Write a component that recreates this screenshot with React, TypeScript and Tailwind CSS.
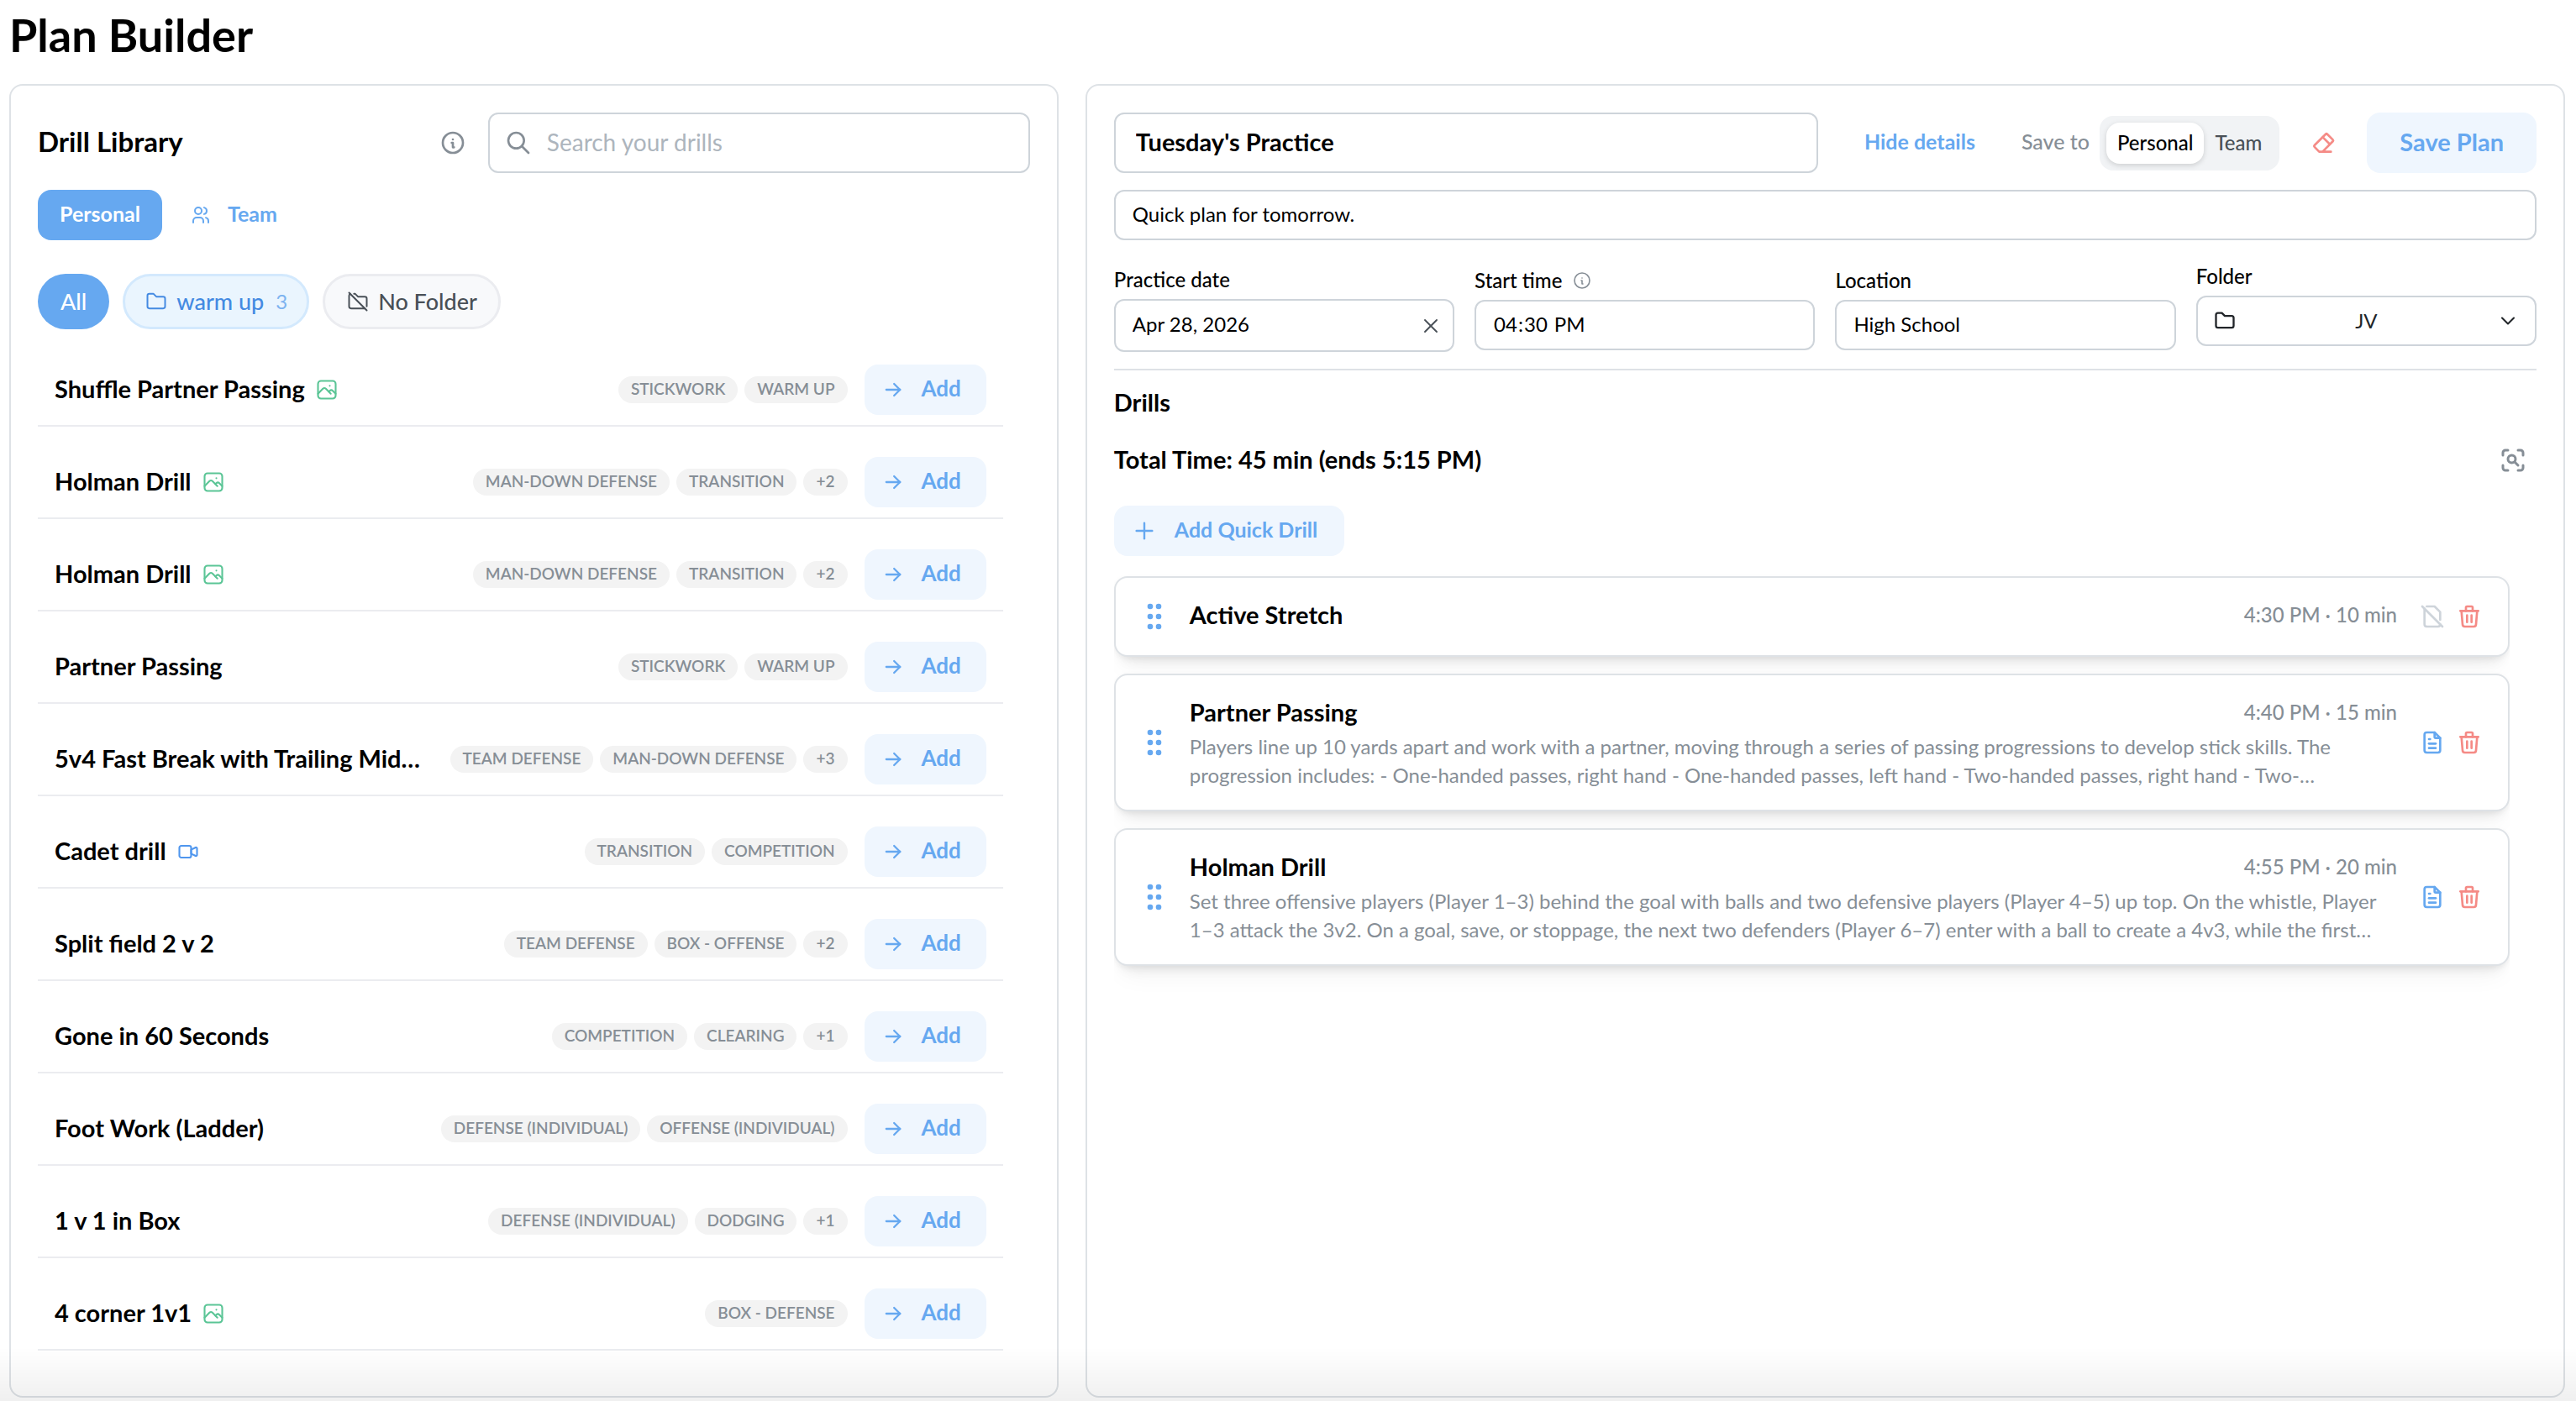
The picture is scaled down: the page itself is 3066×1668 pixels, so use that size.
import React, { useState } from 'react';
import {
  TbArrowRight,
  TbChevronDown,
  TbEraser,
  TbFileOff,
  TbFileText,
  TbFolder,
  TbFolderOff,
  TbInfoCircle,
  TbPhoto,
  TbPlus,
  TbSearch,
  TbTrash,
  TbUsers,
  TbVideo,
  TbX,
  TbZoomScan,
} from 'react-icons/tb';

interface LibraryDrill {
  name: string;
  media?: 'photo' | 'video';
  tags: string[];
}

interface PlanDrill {
  name: string;
  time: string;
  description?: string;
}

const libraryDrills: LibraryDrill[] = [
  { name: 'Shuffle Partner Passing', media: 'photo', tags: ['Stickwork', 'Warm Up'] },
  { name: 'Holman Drill', media: 'photo', tags: ['Man-Down Defense', 'Transition', '+2'] },
  { name: 'Holman Drill', media: 'photo', tags: ['Man-Down Defense', 'Transition', '+2'] },
  { name: 'Partner Passing', tags: ['Stickwork', 'Warm Up'] },
  { name: '5v4 Fast Break with Trailing Mid…', tags: ['Team Defense', 'Man-Down Defense', '+3'] },
  { name: 'Cadet drill', media: 'video', tags: ['Transition', 'Competition'] },
  { name: 'Split field 2 v 2', tags: ['Team Defense', 'Box - Offense', '+2'] },
  { name: 'Gone in 60 Seconds', tags: ['Competition', 'Clearing', '+1'] },
  { name: 'Foot Work (Ladder)', tags: ['Defense (Individual)', 'Offense (Individual)'] },
  { name: '1 v 1 in Box', tags: ['Defense (Individual)', 'Dodging', '+1'] },
  { name: '4 corner 1v1', media: 'photo', tags: ['Box - Defense'] },
];

const planDrills: PlanDrill[] = [
  { name: 'Active Stretch', time: '4:30 PM · 10 min' },
  {
    name: 'Partner Passing',
    time: '4:40 PM · 15 min',
    description:
      'Players line up 10 yards apart and work with a partner, moving through a series of passing progressions to develop stick skills. The progression includes: - One-handed passes, right hand - One-handed passes, left hand - Two-handed passes, right hand - Two-…',
  },
  {
    name: 'Holman Drill',
    time: '4:55 PM · 20 min',
    description:
      'Set three offensive players (Player 1–3) behind the goal with balls and two defensive players (Player 4–5) up top. On the whistle, Player 1–3 attack the 3v2. On a goal, save, or stoppage, the next two defenders (Player 6–7) enter with a ball to create a 4v3, while the first…',
  },
];

const inputClass =
  'w-full rounded-xl border-2 border-[#ced4da] bg-white text-[24px] text-black outline-none';

function GripDots() {
  return (
    <svg width="32" height="32" viewBox="0 0 32 32" fill="currentColor">
      {[4, 16, 28].map((y) => (
        <React.Fragment key={y}>
          <circle cx="11" cy={y} r="3.3" />
          <circle cx="21" cy={y} r="3.3" />
        </React.Fragment>
      ))}
    </svg>
  );
}

function LibraryRow({ drill }: { drill: LibraryDrill }) {
  return (
    <li className="flex items-center border-b-2 border-[#ebecf0] px-5 pt-9 pb-3">
      <div className="mr-4 flex min-w-0 flex-1 items-center gap-3">
        <span className="truncate pb-[3px] text-[29px] leading-10 font-bold text-black">{drill.name}</span>
        {drill.media === 'photo' && <TbPhoto size={28} className="shrink-0 text-[#5bc596]" strokeWidth={1.8} />}
        {drill.media === 'video' && <TbVideo size={28} className="shrink-0 text-[#4f96ee]" strokeWidth={1.8} />}
      </div>
      <div className="mr-5 flex shrink-0 gap-2">
        {drill.tags.map((tag) => (
          <span
            key={tag}
            className="h-8 rounded-full bg-[#f3f3f3] px-[15px] text-[19px] leading-[30px] font-semibold text-[#868e96] uppercase"
          >
            {tag}
          </span>
        ))}
      </div>
      <button className="flex h-[60px] shrink-0 items-center gap-5 rounded-2xl bg-[#eff6fe] pr-[30px] pl-5 text-[26px] font-bold text-[#66a8f0]">
        <TbArrowRight size={28} />
        <span className="pb-[3px]">Add</span>
      </button>
    </li>
  );
}

function DrillLibrary() {
  return (
    <section className="col-span-5 rounded-2xl border-2 border-[#dee2e6] p-8">
      <div className="flex items-center">
        <h2 className="flex-1 pb-1 text-[33px] leading-10 font-bold text-black">Drill Library</h2>
        <button aria-label="About the drill library" className="mr-[26px] text-[#868e96]">
          <TbInfoCircle size={32} />
        </button>
        <div className="flex h-[72px] w-[645px] items-center gap-[18px] rounded-xl border-2 border-[#ced4da] px-[18px]">
          <TbSearch size={32} className="shrink-0 text-[#868e96]" />
          <input
            type="text"
            aria-label="Search your drills"
            placeholder="Search your drills"
            className="min-w-0 flex-1 pb-[3px] text-[28px] outline-none placeholder:text-[#adb5bd]"
          />
        </div>
      </div>

      <div className="mt-5 flex gap-2 text-[25px] font-bold">
        <button className="h-[60px] rounded-2xl bg-[#66a8f0] px-[26px] pb-[3px] text-white">Personal</button>
        <button className="flex h-[60px] items-center gap-5 rounded-2xl px-[26px] text-[#66a8f0]">
          <TbUsers size={24} />
          <span className="pb-[3px]">Team</span>
        </button>
      </div>

      <div className="mt-10 flex gap-4 text-[27px] font-medium">
        <button className="h-[66px] rounded-full bg-[#66a8f0] px-[27px] text-white">All</button>
        <button className="flex h-[66px] items-center rounded-full border-3 border-[#d3e9fd] bg-[#eaf5fe] px-[23px] text-[#448ae2]">
          <TbFolder size={28} strokeWidth={1.7} />
          <span className="ml-[10px]">warm up</span>
          <span className="ml-[14px] text-[24px] font-normal text-[#7db3f0]">3</span>
        </button>
        <button className="flex h-[66px] items-center gap-[10px] rounded-full border-3 border-[#ebecf0] bg-[#f8f9fb] px-[25px] text-[#495057]">
          <TbFolderOff size={28} strokeWidth={1.7} />
          No Folder
        </button>
      </div>

      <ul className="mt-[6px] mr-8">
        {libraryDrills.map((drill, i) => (
          <LibraryRow key={i} drill={drill} />
        ))}
      </ul>
    </section>
  );
}

function PlanCard({ drill }: { drill: PlanDrill }) {
  return (
    <li className="flex items-center rounded-2xl border-2 border-[#dee2e6] bg-white py-6 pr-[30px] pl-[30px] shadow-[0_2px_6px_rgba(0,0,0,0.05),0_20px_30px_-10px_rgba(0,0,0,0.05),0_14px_14px_-10px_rgba(0,0,0,0.08)]">
      <button aria-label={`Move ${drill.name}`} className="mr-[26px] text-[#66a8f0]">
        <GripDots />
      </button>
      <div className="min-w-0 flex-1">
        <div className="mb-[5px] flex items-center justify-between">
          <h4 className="text-[29px] leading-[39px] font-bold text-black">{drill.name}</h4>
          <span className="text-[24px] leading-[39px] font-medium text-[#868e96]">{drill.time}</span>
        </div>
        {drill.description && (
          <p className="line-clamp-2 text-[24px] leading-[34px] text-[#868e96]">{drill.description}</p>
        )}
      </div>
      <div className="ml-[26px] flex gap-3">
        {drill.description ? (
          <button aria-label="Drill notes" className="text-[#66a8f0]">
            <TbFileText size={32} />
          </button>
        ) : (
          <button aria-label="No drill notes" disabled className="text-[#ced4da]">
            <TbFileOff size={32} />
          </button>
        )}
        <button aria-label={`Remove ${drill.name}`} className="text-[#f58b86]">
          <TbTrash size={32} />
        </button>
      </div>
    </li>
  );
}

function PlanEditor() {
  const [title, setTitle] = useState("Tuesday's Practice");
  const [notes, setNotes] = useState('Quick plan for tomorrow.');
  const [date, setDate] = useState('Apr 28, 2026');
  const [start, setStart] = useState('16:30');
  const [location, setLocation] = useState('High School');

  return (
    <section className="col-span-7 rounded-2xl border-2 border-[#dee2e6] p-8">
      <div className="flex items-center">
        <input
          type="text"
          aria-label="Plan title"
          value={title}
          onChange={(e) => setTitle(e.target.value)}
          className="h-[72px] min-w-0 flex-1 rounded-xl border-2 border-[#ced4da] px-6 pb-[3px] text-[29px] font-bold text-black outline-none"
        />
        <button className="mx-[55px] pb-[3px] text-[25px] font-bold text-[#66a8f0]">Hide details</button>
        <span className="mr-3 pb-[3px] text-[25px] font-medium text-[#868e96]">Save to</span>
        <div className="flex rounded-2xl bg-[#f1f3f5] p-2 text-[24px] font-medium">
          <button className="h-[49px] rounded-2xl bg-white px-[13px] text-black shadow-[0_2px_6px_rgba(0,0,0,0.15)]">
            Personal
          </button>
          <button className="h-[49px] px-[13px] text-[#495057]">Team</button>
        </div>
        <button aria-label="Clear plan" className="mx-9 text-[#f58b86]">
          <TbEraser size={32} />
        </button>
        <button className="h-[72px] rounded-2xl bg-[#eff6fe] px-[39px] pb-[3px] text-[29px] font-bold text-[#66a8f0]">
          Save Plan
        </button>
      </div>

      <input
        type="text"
        aria-label="Plan notes"
        value={notes}
        onChange={(e) => setNotes(e.target.value)}
        className={`${inputClass} mt-5 h-[60px] px-5 pb-[3px]`}
      />

      <div className="mt-5 grid grid-cols-4 items-start gap-6 border-b-2 border-[#dee2e6] pb-5 text-[24px]">
        <div className="pt-1">
          <label htmlFor="date" className="block leading-[46px] font-medium text-black">
            Practice date
          </label>
          <div className="flex h-[63px] items-center rounded-xl border-2 border-[#ced4da] pr-3 pl-5">
            <input
              id="date"
              type="text"
              value={date}
              onChange={(e) => setDate(e.target.value)}
              className="min-w-0 flex-1 pb-[3px] text-black outline-none"
            />
            <button aria-label="Clear date" onClick={() => setDate('')} className="text-[#495057]">
              <TbX size={28} strokeWidth={1.6} />
            </button>
          </div>
        </div>
        <div className="pt-[5px]">
          <label htmlFor="start" className="flex items-center gap-3 leading-[46px] font-medium text-black">
            Start time
            <TbInfoCircle size={24} strokeWidth={1.6} className="text-[#868e96]" />
          </label>
          <input
            id="start"
            type="time"
            value={start}
            onChange={(e) => setStart(e.target.value)}
            className={`${inputClass} h-[60px] px-5 pb-[3px] [&::-webkit-calendar-picker-indicator]:hidden`}
          />
        </div>
        <div className="pt-[5px]">
          <label htmlFor="location" className="block leading-[46px] font-medium text-black">
            Location
          </label>
          <input
            id="location"
            type="text"
            value={location}
            onChange={(e) => setLocation(e.target.value)}
            className={`${inputClass} h-[60px] px-5 pb-[3px]`}
          />
        </div>
        <div>
          <label htmlFor="folder" className="block leading-[46px] font-medium text-black">
            Folder
          </label>
          <div className="flex h-[60px] items-center rounded-xl border-2 border-[#ced4da] px-[18px] text-[#212529]">
            <TbFolder size={28} />
            <select id="folder" className="min-w-0 flex-1 appearance-none text-center outline-none">
              <option>JV</option>
            </select>
            <TbChevronDown size={28} strokeWidth={1.8} />
          </div>
        </div>
      </div>

      <h3 className="mt-[18px] text-[29px] leading-10 font-bold text-black">Drills</h3>
      <div className="mt-7 flex items-center justify-between pr-[10px]">
        <p className="pb-[2px] text-[29px] leading-10 font-bold text-black">Total Time: 45 min (ends 5:15 PM)</p>
        <button aria-label="Preview plan" className="text-[#868e96]">
          <TbZoomScan size={36} />
        </button>
      </div>
      <button className="mt-[33px] flex h-[60px] items-center gap-5 rounded-2xl bg-[#eff6fe] pr-8 pl-5 text-[25px] font-bold text-[#66a8f0]">
        <TbPlus size={32} strokeWidth={1.8} />
        <span className="pb-[3px]">Add Quick Drill</span>
      </button>

      <ul className="mt-6 mr-8 flex flex-col gap-5 overflow-x-clip">
        {planDrills.map((drill) => (
          <PlanCard key={drill.name} drill={drill} />
        ))}
      </ul>
    </section>
  );
}

export default function App() {
  return (
    <main className="flex min-h-screen flex-col bg-white pr-[13px] pb-1 pl-[11px] font-['Lato','Open_Sans',sans-serif]">
      <h1 className="mb-4 text-[54px] leading-[84px] font-bold text-black">Plan Builder</h1>
      <div className="grid flex-1 grid-cols-12 gap-8">
        <DrillLibrary />
        <PlanEditor />
      </div>
      {/* soft fade along the window's lower edge */}
      <div className="pointer-events-none fixed inset-x-0 bottom-0 h-16 bg-linear-to-b from-transparent to-black/6" />
    </main>
  );
}
